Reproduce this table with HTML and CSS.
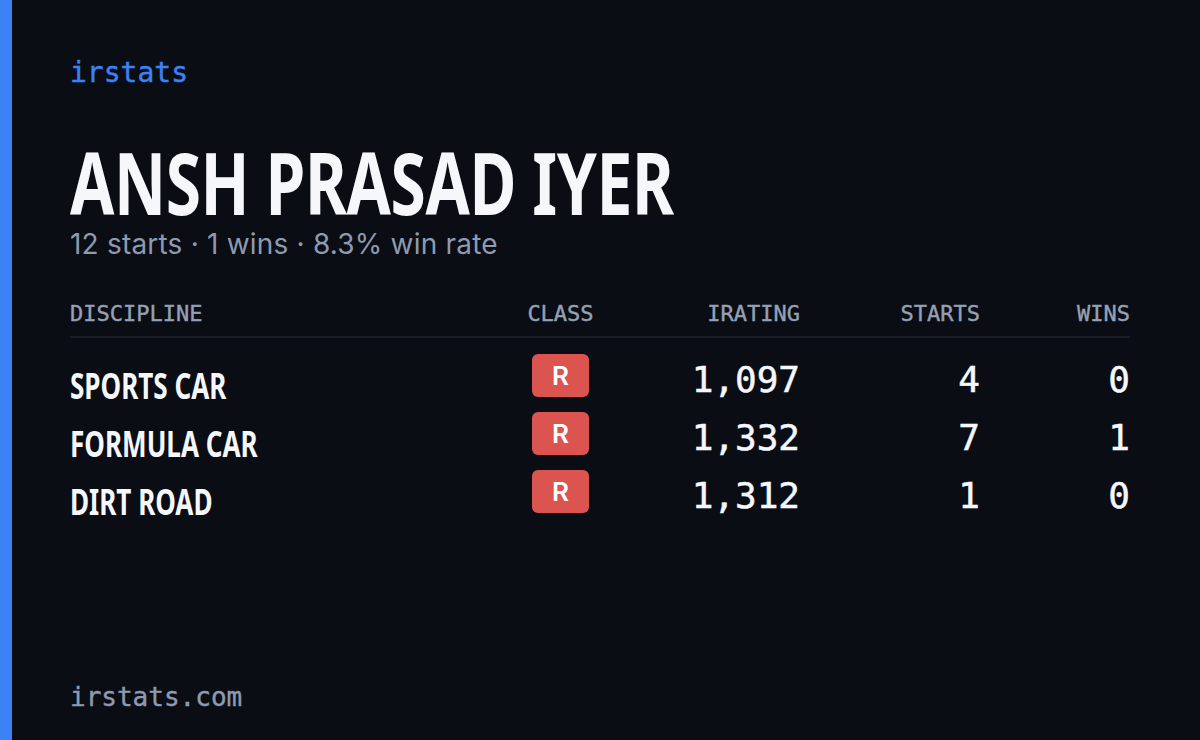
FILE: index.html
```html
<!DOCTYPE html>
<html lang="en">
<head>
<meta charset="utf-8">
<title>irstats – Ansh Prasad Iyer</title>
<link rel="stylesheet" href="styles.css">
</head>
<body>
<div class="card">
  <div class="accent"></div>
  <main class="content">
    <div class="brand">irstats</div>
    <h1 class="name">ANSH PRASAD IYER</h1>
    <p class="summary">12 starts · 1 wins · 8.3% win rate</p>
    <div class="table">
      <div class="row head">
        <div class="cell">DISCIPLINE</div>
        <div class="cell center">CLASS</div>
        <div class="cell right">IRATING</div>
        <div class="cell right">STARTS</div>
        <div class="cell right">WINS</div>
      </div>
      <div class="rows">
        <div class="row">
          <div class="cell disc">SPORTS CAR</div>
          <div class="cell center"><span class="badge">R</span></div>
          <div class="cell num">1,097</div>
          <div class="cell num">4</div>
          <div class="cell num">0</div>
        </div>
        <div class="row">
          <div class="cell disc">FORMULA CAR</div>
          <div class="cell center"><span class="badge">R</span></div>
          <div class="cell num">1,332</div>
          <div class="cell num">7</div>
          <div class="cell num">1</div>
        </div>
        <div class="row">
          <div class="cell disc">DIRT ROAD</div>
          <div class="cell center"><span class="badge">R</span></div>
          <div class="cell num">1,312</div>
          <div class="cell num">1</div>
          <div class="cell num">0</div>
        </div>
      </div>
    </div>
    <div class="footer">irstats.com</div>
  </main>
</div>
</body>
</html>
```

FILE: styles.css
```css
* { box-sizing: border-box; }

html, body {
  margin: 0;
  padding: 0;
  background: #0a0d14;
}

.card {
  display: flex;
  width: 1200px;
  height: 740px;
  background: #0a0d14;
  overflow: hidden;
}

.accent {
  width: 12px;
  flex: none;
  background: #3b82f6;
}

.content {
  flex: 1;
  display: flex;
  flex-direction: column;
  padding: 59px 70px 30px 58px;
}

.brand {
  font-family: "DejaVu Sans Mono", "Liberation Mono", monospace;
  font-size: 28px;
  line-height: 28px;
  color: #3b82f6;
  -webkit-text-stroke: 0.4px currentColor;
}

.name {
  margin: 52px 0 0;
  font-family: "Noto Sans", "DejaVu Sans Condensed", sans-serif;
  font-weight: 700;
  font-size: 86px;
  line-height: 86px;
  letter-spacing: -0.5px;
  color: #f5f7fb;
  transform: scaleX(0.745);
  transform-origin: 0 0;
}

.summary {
  margin: 2px 0 0;
  font-family: Inter, "Noto Sans", sans-serif;
  font-size: 28px;
  line-height: 34px;
  letter-spacing: 0.2px;
  color: #8e9ab0;
}

.table {
  margin-top: 42px;
}

.row {
  display: grid;
  grid-template-columns: 445px 91px 194px 180px 150px;
  height: 43px;
  align-items: start;
}

.row.head {
  height: auto;
  padding-bottom: 11px;
  border-bottom: 2px solid #191d27;
  font-family: "DejaVu Sans Mono", "Liberation Mono", monospace;
  font-size: 22px;
  line-height: 22px;
  color: #94a0b4;
  -webkit-text-stroke: 0.4px currentColor;
}

.rows {
  display: flex;
  flex-direction: column;
  gap: 15px;
  padding-top: 16px;
}

.center { text-align: center; }
.right { text-align: right; }

.disc {
  padding-top: 15px;
  font-family: "Noto Sans", "DejaVu Sans Condensed", sans-serif;
  font-weight: 700;
  font-size: 35px;
  line-height: 34px;
  color: #f5f7fb;
  transform: scaleX(0.745);
  transform-origin: 0 0;
}

.badge {
  display: inline-flex;
  align-items: center;
  justify-content: center;
  width: 57px;
  height: 43px;
  border-radius: 6px;
  background: #db5450;
  color: #ffffff;
  font-family: Inter, "Noto Sans", sans-serif;
  font-weight: 600;
  font-size: 26px;
}

.num {
  padding-top: 9px;
  text-align: right;
  font-family: "DejaVu Sans Mono", "Liberation Mono", monospace;
  font-size: 36px;
  line-height: 34px;
  color: #f5f7fb;
  -webkit-text-stroke: 0.5px currentColor;
}

.footer {
  margin-top: auto;
  font-family: "DejaVu Sans Mono", "Liberation Mono", monospace;
  font-size: 26px;
  line-height: 26px;
  color: #8e9ab0;
  -webkit-text-stroke: 0.4px currentColor;
}
```
